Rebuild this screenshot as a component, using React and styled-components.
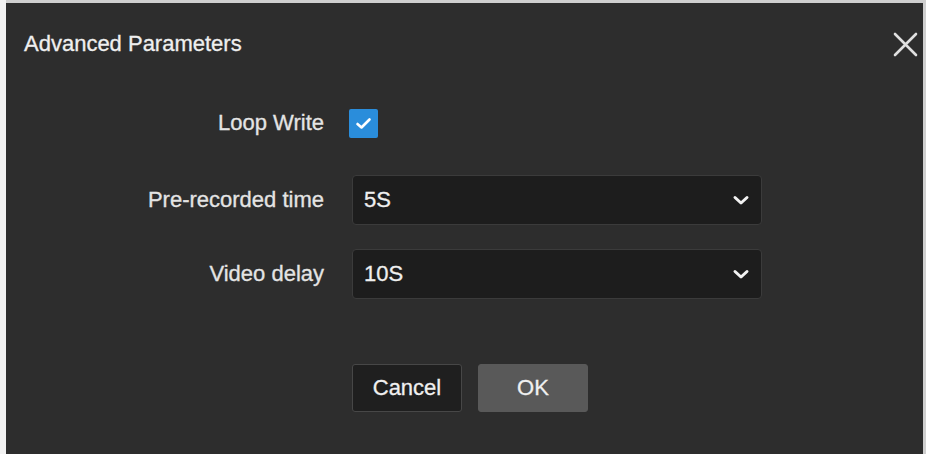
import { useState } from "react";
import styled, { createGlobalStyle } from "styled-components";

const GlobalStyle = createGlobalStyle`
  html, body {
    margin: 0;
    padding: 0;
    background: #d9d9d9;
  }
  body {
    font-family: "Liberation Sans", Arial, sans-serif;
  }
`;

const Page = styled.div`
  width: 926px;
  height: 454px;
  box-sizing: border-box;
  padding: 3px 3px 0 6px;
  background: linear-gradient(90deg, #f2f2f2 0 6px, #cfcfcf 6px);
  overflow: hidden;
`;

const Dialog = styled.div`
  height: 100%;
  background: #2d2d2d;
  display: flex;
  flex-direction: column;
`;

const Header = styled.div`
  height: 82px;
  display: flex;
  align-items: center;
  justify-content: space-between;
  padding: 0 5px 0 18px;
`;

const Title = styled.h2`
  margin: 0;
  font-size: 22px;
  font-weight: normal;
  color: #efefef;
  -webkit-text-stroke: 0.3px #efefef;
`;

const CloseButton = styled.button`
  width: 25px;
  height: 25px;
  padding: 0;
  border: none;
  background: transparent;
  display: flex;
  align-items: center;
  justify-content: center;
  cursor: pointer;
`;

const Form = styled.div`
  display: flex;
  flex-direction: column;
  padding-top: 22px;
`;

const Row = styled.div`
  display: grid;
  grid-template-columns: 318px 410px;
  column-gap: ${(p) => p.$gap || 28}px;
  align-items: center;
  height: ${(p) => p.$height}px;
  margin-bottom: ${(p) => p.$after || 0}px;
`;

const Label = styled.label`
  text-align: right;
  font-size: 22px;
  color: #e4e4e4;
  -webkit-text-stroke: 0.3px #e4e4e4;
`;

const CheckBox = styled.span`
  width: 29px;
  height: 29px;
  border-radius: 2px;
  background: ${(p) => (p.$checked ? "#2a8ddb" : "#1e1e1e")};
  border: ${(p) => (p.$checked ? "none" : "1px solid #555")};
  display: flex;
  align-items: center;
  justify-content: center;
  cursor: pointer;
`;

const SelectBox = styled.div`
  height: 100%;
  box-sizing: border-box;
  background: #1d1d1d;
  border: 1px solid #3b3b3b;
  border-radius: 4px;
  display: flex;
  align-items: center;
  justify-content: space-between;
  padding: 0 11px 0 11px;
  font-size: 22px;
  color: #efefef;
  -webkit-text-stroke: 0.3px #efefef;
  cursor: pointer;
`;

const Footer = styled.div`
  display: flex;
  gap: 16px;
  margin-top: 65px;
  padding-left: 346px;
`;

const Button = styled.button`
  width: 110px;
  height: 48px;
  border-radius: 3px;
  font-family: "Liberation Sans", Arial, sans-serif;
  font-size: 22px;
  color: #f0f0f0;
  -webkit-text-stroke: 0.3px #f0f0f0;
  background: ${(p) => (p.$primary ? "#595959" : "#1f1f1f")};
  border: 1px solid ${(p) => (p.$primary ? "#595959" : "#474747")};
  cursor: pointer;
`;

const Chevron = () => (
  <svg width="18" height="11" viewBox="0 0 18 11">
    <path
      d="M3 2.5l6 5.5 6-5.5"
      fill="none"
      stroke="#f2f2f2"
      strokeWidth="3"
      strokeLinecap="round"
      strokeLinejoin="round"
    />
  </svg>
);

const Select = ({ value }) => (
  <SelectBox>
    <span>{value}</span>
    <Chevron />
  </SelectBox>
);

export default function App() {
  const [loop, setLoop] = useState(true);

  return (
    <>
      <GlobalStyle />
      <Page>
        <Dialog>
          <Header>
            <Title>Advanced Parameters</Title>
            <CloseButton aria-label="close">
              <svg width="25" height="25" viewBox="0 0 25 25">
                <path
                  d="M2 2l21 21M23 2L2 23"
                  stroke="#e0e0e0"
                  strokeWidth="2.6"
                  strokeLinecap="round"
                />
              </svg>
            </CloseButton>
          </Header>
          <Form>
            <Row $height={32} $after={36} $gap={25}>
              <Label>Loop Write</Label>
              <CheckBox $checked={loop} onClick={() => setLoop(!loop)}>
                {loop && (
                  <svg width="17" height="13" viewBox="0 0 17 13">
                    <path
                      d="M2.5 7l4 3.5 8-8"
                      fill="none"
                      stroke="#fff"
                      strokeWidth="2.6"
                      strokeLinecap="round"
                      strokeLinejoin="round"
                    />
                  </svg>
                )}
              </CheckBox>
            </Row>
            <Row $height={50} $after={24}>
              <Label>Pre-recorded time</Label>
              <Select value="5S" />
            </Row>
            <Row $height={50}>
              <Label>Video delay</Label>
              <Select value="10S" />
            </Row>
          </Form>
          <Footer>
            <Button>Cancel</Button>
            <Button $primary>OK</Button>
          </Footer>
        </Dialog>
      </Page>
    </>
  );
}
